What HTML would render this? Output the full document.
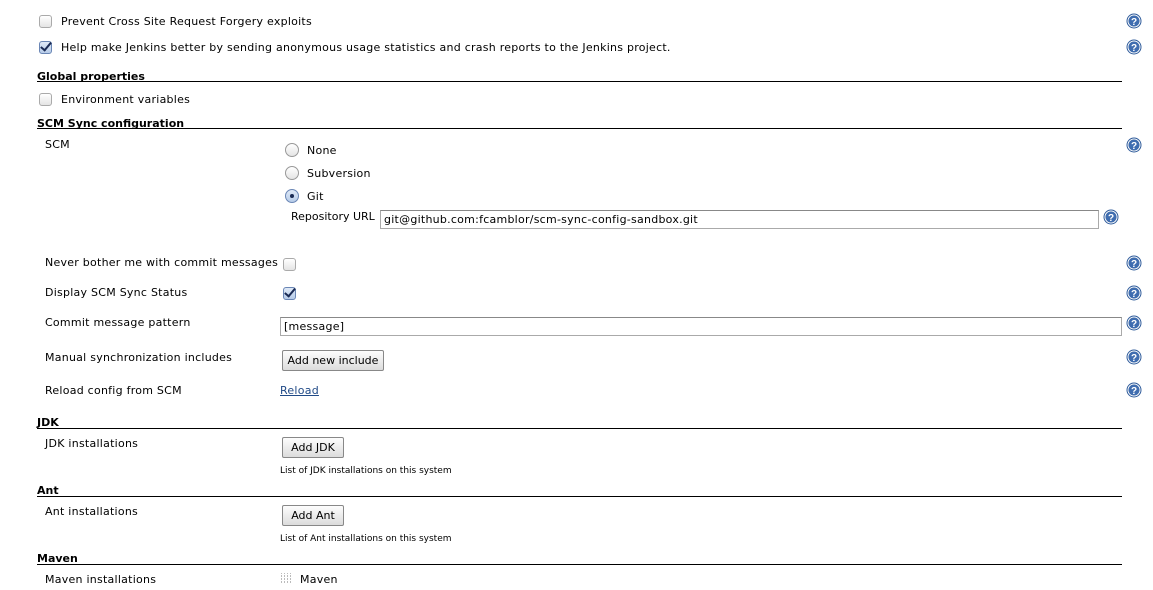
<!DOCTYPE html>
<html><head><meta charset="utf-8"><style>
body{margin:0;width:1153px;height:590px;background:#fff;position:relative;overflow:hidden;font-family:"DejaVu Sans","Liberation Sans",sans-serif;font-size:11px;color:#000}
.a{position:absolute;white-space:nowrap;line-height:14px;letter-spacing:0.25px;margin-top:1px}
.b{font-weight:bold;letter-spacing:0}
.hr{position:absolute;left:37px;width:1085px;height:1px;background:#000}
.cb{position:absolute;width:11px;height:11px;border:1px solid #aaa;border-radius:3px;background:linear-gradient(#fff,#e4e4e4)}
.ck{background:linear-gradient(#dfe9f7,#b6cbe8);border-color:#6a86b5}
.ck:after{content:"";position:absolute;left:3px;top:-2px;width:4px;height:9px;border:solid #1a2b55;border-width:0 2px 2px 0;transform:rotate(40deg)}
.rd{position:absolute;width:12px;height:12px;border:1px solid #999;border-radius:50%;background:linear-gradient(#fff,#e4e4e4)}
.rd.on{background:linear-gradient(#dfe9f7,#b6cbe8);border-color:#6a86b5}
.rd.on:after{content:"";position:absolute;left:4px;top:4px;width:4px;height:4px;border-radius:50%;background:#1a2b55}
.h{position:absolute;width:16px;height:16px}
.in{position:absolute;border:1px solid #aaa;border-top-color:#888;height:17px;line-height:17px;padding-left:3px;box-sizing:content-box;font-size:11px;letter-spacing:0.25px}
.btn{position:absolute;border:1px solid #888;border-radius:2px;background:linear-gradient(#fdfdfd,#dcdcdc);text-align:center;line-height:19px;height:19px;font-size:11px}
.sm{font-size:9px;letter-spacing:0}
</style></head><body>
<svg width="0" height="0" style="position:absolute"><defs><symbol id="q" viewBox="0 0 16 16"><circle cx="8" cy="8" r="7.5" fill="#2d5a9a"/><circle cx="8" cy="8" r="6" fill="none" stroke="#fff" stroke-width="1"/><circle cx="8" cy="8" r="5.3" fill="#3f6db0"/><text x="8" y="12" font-size="10" font-weight="bold" fill="#fff" text-anchor="middle" font-family="Liberation Sans,sans-serif">?</text></symbol></defs></svg>

<div class="cb" style="left:39px;top:15px"></div><div class="a" style="left:61px;top:14px">Prevent Cross Site Request Forgery exploits</div>
<svg class="h" style="left:1126px;top:13px"><use href="#q"/></svg>
<div class="cb ck" style="left:39px;top:41px"></div><div class="a" style="left:61px;top:40px">Help make Jenkins better by sending anonymous usage statistics and crash reports to the Jenkins project.</div>
<svg class="h" style="left:1126px;top:39px"><use href="#q"/></svg>

<div class="a b" style="left:37px;top:69px">Global properties</div><div class="hr" style="top:81px"></div>
<div class="cb" style="left:39px;top:93px"></div><div class="a" style="left:61px;top:92px">Environment variables</div>

<div class="a b" style="left:37px;top:116px">SCM Sync configuration</div><div class="hr" style="top:128px"></div>
<div class="a" style="left:45px;top:137px">SCM</div>
<svg class="h" style="left:1126px;top:137px"><use href="#q"/></svg>
<div class="rd" style="left:285px;top:143px"></div><div class="a" style="left:307px;top:143px">None</div>
<div class="rd" style="left:285px;top:166px"></div><div class="a" style="left:307px;top:166px">Subversion</div>
<div class="rd on" style="left:285px;top:189px"></div><div class="a" style="left:307px;top:189px">Git</div>
<div class="a" style="left:291px;top:209px;letter-spacing:0">Repository URL</div>
<div class="in" style="left:380px;top:210px;width:714px">git@github.com:fcamblor/scm-sync-config-sandbox.git</div>
<svg class="h" style="left:1103px;top:209px"><use href="#q"/></svg>

<div class="a" style="left:45px;top:255px">Never bother me with commit messages</div>
<div class="cb" style="left:283px;top:258px"></div>
<svg class="h" style="left:1126px;top:255px"><use href="#q"/></svg>
<div class="a" style="left:45px;top:285px">Display SCM Sync Status</div>
<div class="cb ck" style="left:283px;top:287px"></div>
<svg class="h" style="left:1126px;top:285px"><use href="#q"/></svg>
<div class="a" style="left:45px;top:315px">Commit message pattern</div>
<div class="in" style="left:280px;top:317px;width:837px">[message]</div>
<svg class="h" style="left:1126px;top:315px"><use href="#q"/></svg>
<div class="a" style="left:45px;top:350px">Manual synchronization includes</div>
<div class="btn" style="left:282px;top:350px;width:100px">Add new include</div>
<svg class="h" style="left:1126px;top:349px"><use href="#q"/></svg>
<div class="a" style="left:45px;top:383px">Reload config from SCM</div>
<div class="a" style="left:280px;top:383px;color:#204a87;text-decoration:underline">Reload</div>
<svg class="h" style="left:1126px;top:382px"><use href="#q"/></svg>

<div class="a b" style="left:37px;top:415px">JDK</div><div class="hr" style="top:428px"></div>
<div class="a" style="left:45px;top:436px">JDK installations</div>
<div class="btn" style="left:282px;top:437px;width:60px">Add JDK</div>
<div class="a sm" style="left:280px;top:463px">List of JDK installations on this system</div>

<div class="a b" style="left:37px;top:483px">Ant</div><div class="hr" style="top:496px"></div>
<div class="a" style="left:45px;top:504px">Ant installations</div>
<div class="btn" style="left:282px;top:505px;width:60px">Add Ant</div>
<div class="a sm" style="left:280px;top:531px">List of Ant installations on this system</div>

<div class="a b" style="left:37px;top:551px">Maven</div><div class="hr" style="top:564px"></div>
<div class="a" style="left:45px;top:572px">Maven installations</div>
<svg style="position:absolute;left:281px;top:573px" width="11" height="11"><g fill="#bbb"><rect x="0" y="0" width="1" height="11"/><rect x="3" y="0" width="1" height="11"/><rect x="6" y="0" width="1" height="11"/><rect x="9" y="0" width="1" height="11"/></g><g fill="#fff"><rect x="0" y="1" width="11" height="1"/><rect x="0" y="4" width="11" height="1"/><rect x="0" y="7" width="11" height="1"/><rect x="0" y="10" width="11" height="1"/></g></svg>
<div class="a" style="left:300px;top:572px">Maven</div>
</body></html>
